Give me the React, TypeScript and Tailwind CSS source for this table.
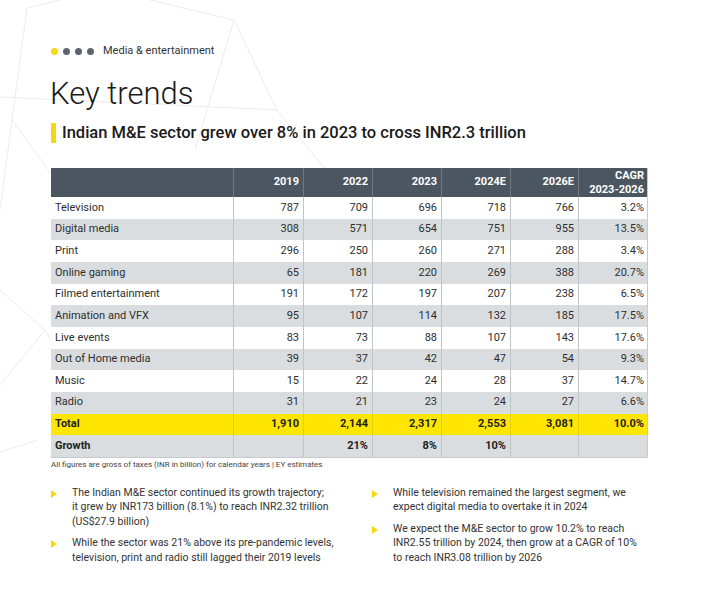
const rows = [
  { label: "Television", values: ["787", "709", "696", "718", "766", "3.2%"] },
  { label: "Digital media", values: ["308", "571", "654", "751", "955", "13.5%"] },
  { label: "Print", values: ["296", "250", "260", "271", "288", "3.4%"] },
  { label: "Online gaming", values: ["65", "181", "220", "269", "388", "20.7%"] },
  { label: "Filmed entertainment", values: ["191", "172", "197", "207", "238", "6.5%"] },
  { label: "Animation and VFX", values: ["95", "107", "114", "132", "185", "17.5%"] },
  { label: "Live events", values: ["83", "73", "88", "107", "143", "17.6%"] },
  { label: "Out of Home media", values: ["39", "37", "42", "47", "54", "9.3%"] },
  { label: "Music", values: ["15", "22", "24", "28", "37", "14.7%"] },
  { label: "Radio", values: ["31", "21", "23", "24", "27", "6.6%"] },
]

const total = ["1,910", "2,144", "2,317", "2,553", "3,081", "10.0%"]
const growth = ["", "21%", "8%", "10%", "", ""]

const cols = "grid grid-cols-[182px_70px_69px_69px_69px_68px_70px]"

function Bullet({ children }: { children: React.ReactNode }) {
  return (
    <div className="flex">
      <svg width="6" height="8" viewBox="0 0 6 8" className="mt-[4px] mr-[15px] shrink-0">
        <path d="M0 0 L6 4 L0 8 Z" fill="#f5d80f" />
      </svg>
      <p className="leading-[14.5px]">{children}</p>
    </div>
  )
}

export default function App() {
  return (
    <div className="relative w-[706px] h-[612px] overflow-hidden bg-white font-['Roboto',sans-serif] text-[#2e2e2e]">
      {/* faint network backdrop */}
      <svg className="absolute inset-0" width="706" height="612" fill="none" stroke="#ececec" strokeWidth="1">
        <path d="M0 97 L277 110 L234 20 L150 0" />
        <path d="M27 8 L0 210" />
        <path d="M27 8 L60 0" />
        <path d="M234 20 L195 150" />
        <path d="M277 110 L330 175" />
        <path d="M45 330 L0 290 M45 330 L0 385 M45 330 L51 340" />
        <path d="M0 452 L38 440" />
        <path d="M12 120 L52 175" />
      </svg>

      <div className="relative pl-[51px] pt-[45px]">
        {/* section tag */}
        <div className="flex items-center h-[12px]">
          <span className="w-[7px] h-[7px] rounded-full bg-[#f5d80f]" />
          <span className="ml-[5px] w-[7px] h-[7px] rounded-full bg-[#5d646d]" />
          <span className="ml-[5px] w-[7px] h-[7px] rounded-full bg-[#5d646d]" />
          <span className="ml-[5px] w-[7px] h-[7px] rounded-full bg-[#5d646d]" />
          <span className="ml-[9px] text-[11px] text-[#333]">Media &amp; entertainment</span>
        </div>

        <h1 className="mt-[19px] text-[31px] leading-[36px] font-light text-[#1a1a1a] -ml-[1px]">Key trends</h1>

        <div className="mt-[11px] flex items-center h-[20px]">
          <span className="w-[5px] h-[20px] bg-[#f5d80f]" />
          <h2 className="ml-[6px] text-[16.5px] font-medium text-[#1a1a1a]">
            Indian M&amp;E sector grew over 8% in 2023 to cross INR2.3 trillion
          </h2>
        </div>

        {/* table */}
        <div className="mt-[25px] w-[597px] border-r border-b border-[#c5cace] text-[11px]">
          <div className={`${cols} h-[29px] bg-[#4b5660] text-white font-bold`}>
            <div />
            {["2019", "2022", "2023", "2024E", "2026E"].map((y) => (
              <div key={y} className="flex items-center justify-end pr-[4px] border-l border-[#6f7981]">
                {y}
              </div>
            ))}
            <div className="flex flex-col items-end justify-center pr-[4px] border-l border-[#6f7981] leading-[14px]">
              <span>CAGR</span>
              <span>2023-2026</span>
            </div>
          </div>

          {rows.map((r, i) => (
            <div key={r.label} className={`${cols} h-[21.67px] ${i % 2 === 0 ? "bg-white" : "bg-[#d9dde0]"}`}>
              <div className="flex items-center pl-[4px]">{r.label}</div>
              {r.values.map((v, j) => (
                <div key={j} className="flex items-center justify-end pr-[4px] border-l border-[#bfc4c9]">
                  {v}
                </div>
              ))}
            </div>
          ))}

          <div className={`${cols} h-[21.67px] bg-[#ffe600] font-bold text-[#222]`}>
            <div className="flex items-center pl-[4px]">Total</div>
            {total.map((v, j) => (
              <div key={j} className="flex items-center justify-end pr-[4px] border-l border-[#e6cf00]">
                {v}
              </div>
            ))}
          </div>

          <div className={`${cols} h-[21.67px] bg-[#d9dde0] font-bold text-[#222]`}>
            <div className="flex items-center pl-[4px]">Growth</div>
            {growth.map((v, j) => (
              <div key={j} className="flex items-center justify-end pr-[4px] border-l border-[#bfc4c9]">
                {v}
              </div>
            ))}
          </div>
        </div>

        <p className="mt-[1px] text-[8px] leading-[12px] text-[#444]">
          All figures are gross of taxes (INR in billion) for calendar years | EY estimates
        </p>

        {/* key points */}
        <div className="mt-[15px] grid grid-cols-[321px_280px] text-[10.5px] text-[#333]">
          <div className="flex flex-col gap-[7px]">
            <Bullet>
              The Indian M&amp;E sector continued its growth trajectory;
              <br />
              it grew by INR173 billion (8.1%) to reach INR2.32 trillion
              <br />
              (US$27.9 billion)
            </Bullet>
            <Bullet>
              While the sector was 21% above its pre-pandemic levels,
              <br />
              television, print and radio still lagged their 2019 levels
            </Bullet>
          </div>
          <div className="flex flex-col gap-[7px]">
            <Bullet>
              While television remained the largest segment, we
              <br />
              expect digital media to overtake it in 2024
            </Bullet>
            <Bullet>
              We expect the M&amp;E sector to grow 10.2% to reach
              <br />
              INR2.55 trillion by 2024, then grow at a CAGR of 10%
              <br />
              to reach INR3.08 trillion by 2026
            </Bullet>
          </div>
        </div>
      </div>
    </div>
  )
}
